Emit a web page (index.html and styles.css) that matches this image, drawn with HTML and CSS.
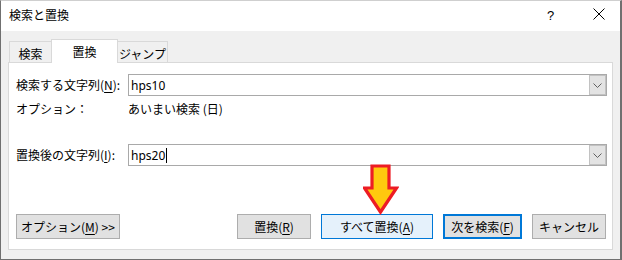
FILE: index.html
```html
<!DOCTYPE html>
<html lang="ja">
<head>
<meta charset="utf-8">
<link rel="stylesheet" href="styles.css">
</head>
<body>
<div class="window">
  <div class="titlebar">
    <span class="title">検索と置換</span>
    <span class="help">?</span>
    <span class="close">
      <svg width="12" height="12" viewBox="0 0 12 12"><path d="M0.5 0.5 L11.5 11.5 M11.5 0.5 L0.5 11.5" stroke="#000" stroke-width="1" fill="none"/></svg>
    </span>
  </div>
  <div class="body">
    <div class="tabs">
      <div class="tab t1">検索</div>
      <div class="tab active">置換</div>
      <div class="tab t3">ジャンプ</div>
    </div>
    <div class="panel">
      <div class="row">
        <label class="label">検索する文字列(<u>N</u>):</label>
        <div class="combo">
          <div class="value">hps10</div>
          <div class="drop"><svg width="9" height="5" viewBox="0 0 9 5"><path d="M0.5 0.5 L4.5 4.5 L8.5 0.5" stroke="#606060" stroke-width="1" fill="none"/></svg></div>
        </div>
      </div>
      <div class="row opt">
        <span class="label">オプション：</span>
        <span class="optval">あいまい検索 (日)</span>
      </div>
      <div class="row replace">
        <label class="label">置換後の文字列(<u>I</u>):</label>
        <div class="combo">
          <div class="value">hps20<span class="caret"></span></div>
          <div class="drop"><svg width="9" height="5" viewBox="0 0 9 5"><path d="M0.5 0.5 L4.5 4.5 L8.5 0.5" stroke="#606060" stroke-width="1" fill="none"/></svg></div>
        </div>
      </div>
      <div class="buttons">
        <button class="btn b-opt">オプション(<u>M</u>) &gt;&gt;</button>
        <span class="spacer"></span>
        <button class="btn b-rep">置換(<u>R</u>)</button>
        <button class="btn b-all">すべて置換(<u>A</u>)</button>
        <button class="btn b-next">次を検索(<u>F</u>)</button>
        <button class="btn b-cancel">キャンセル</button>
      </div>
      <svg class="arrow" width="36" height="51" viewBox="0 0 36 51">
        <path d="M9 2 H26 V24 H33.5 L17.5 48 L1.5 24 H9 Z" fill="#ffc90e" stroke="#ed1c24" stroke-width="3.2" stroke-linejoin="miter"/>
      </svg>
    </div>
  </div>
</div>
</body>
</html>
```
FILE: styles.css
```css
* { box-sizing: border-box; }
html, body { margin: 0; padding: 0; }
body {
  font-family: "Noto Sans CJK JP", "Noto Sans", sans-serif;
  font-size: 12px;
  color: #000;
  background: #fff;
}
.window {
  width: 622px;
  height: 260px;
  background: #f0f0f0;
  border-left: 1px solid #707070;
  border-right: 2px solid #707070;
  border-bottom: 1px solid #707070;
  border-top: 1px solid #cfcfcf;
  display: flex;
  flex-direction: column;
}
.titlebar {
  height: 30px;
  background: #fff;
  display: flex;
  align-items: center;
  padding-left: 8px;
}
.title { flex: 1; font-size: 12px; line-height: 16px; margin-top: -2px; }
.help {
  font-family: "Liberation Sans", sans-serif;
  font-size: 13px;
  width: 8px;
  margin-right: 38px;
  margin-top: -1px;
}
.close {
  width: 12px; height: 12px;
  margin-right: 15px;
  margin-top: -4px;
  display: flex;
}
.body {
  flex: 1;
  padding: 8px 7px 9px 7px;
  display: flex;
  flex-direction: column;
}
.tabs {
  display: flex;
  align-items: flex-end;
  height: 23px;
  padding-left: 1px;
  position: relative;
  z-index: 1;
}
.tab {
  flex: none;
  height: 21px;
  border: 1px solid #d9d9d9;
  border-bottom: none;
  background: #f0f0f0;
  padding: 3px 0 0 0;
  display: flex;
  align-items: center;
  justify-content: center;
  line-height: 14px;
  white-space: nowrap;
}
.t1 { width: 43px; }
.tab.active {
  height: 24px;
  width: 67px;
  background: #fff;
  margin: 0 -1px -1px -1px;
  padding-top: 1px;
  position: relative;
  z-index: 2;
}
.t3 { width: 51px; }
.panel {
  flex: 1;
  background: #fff;
  border: 1px solid #d9d9d9;
  padding: 11px 5px 0 7px;
  position: relative;
  display: flex;
  flex-direction: column;
}
.row {
  display: flex;
  align-items: center;
  height: 22px;
}
.label {
  width: 112px;
  flex: none;
  line-height: 14px;
}
.combo {
  width: 479px;
  flex: none;
  height: 22px;
  border: 1px solid #a9a9a9;
  display: flex;
  background: #fff;
}
.value {
  flex: 1;
  font-family: "Noto Sans", sans-serif;
  font-size: 12px;
  line-height: 18px;
  padding-left: 2px;
  padding-top: 1px;
  display: flex;
  align-items: center;
}
.caret {
  display: inline-block;
  width: 1px;
  height: 15px;
  background: #000;
  margin-left: 1px;
}
.drop {
  width: 17px;
  background: #e3e3e3;
  border: 1px solid #c2c2c2;
  display: flex;
  align-items: center;
  justify-content: center;
  padding-top: 1px;
}
.opt { margin-top: 2px; }
.optval { line-height: 14px; }
.replace { margin-top: 24px; }
.buttons {
  display: flex;
  align-items: center;
  margin-top: 48px;
  height: 25px;
}
.btn {
  flex: none;
  font-family: "Noto Sans CJK JP", "Noto Sans", sans-serif;
  font-size: 12px;
  color: #000;
  height: 25px;
  background: #e1e1e1;
  border: 1px solid #adadad;
  padding: 0;
  margin: 0;
  line-height: 14px;
  white-space: nowrap;
}
.b-opt { width: 104px; }
.spacer { flex: 1; }
.b-rep { width: 74px; }
.b-all { width: 112px; margin-left: 10px; background: #e5f1fb; border-color: #0078d7; }
.b-next { width: 79px; margin-left: 10px; border: 2px solid #0078d7; }
.b-cancel { width: 74px; margin-left: 10px; margin-right: 1px; }
.arrow {
  position: absolute;
  left: 354px;
  top: 101px;
}
u { text-decoration-thickness: 1px; text-underline-offset: 2px; }
```
